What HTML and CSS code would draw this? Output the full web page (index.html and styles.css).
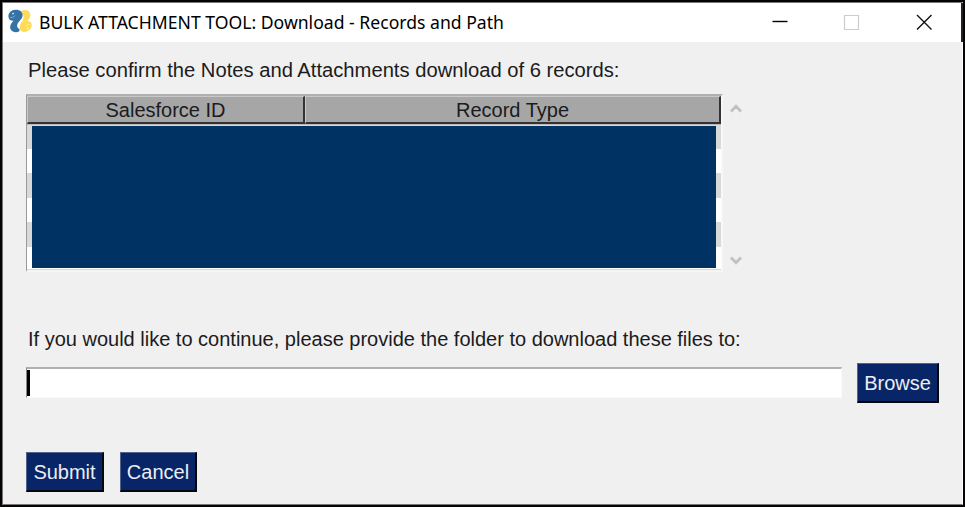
FILE: index.html
```
<!DOCTYPE html>
<html lang="en">
<head>
<meta charset="utf-8">
<title>BULK ATTACHMENT TOOL</title>
<link rel="stylesheet" href="styles.css">
</head>
<body>
<main class="window">
  <header class="titlebar">
    <svg class="logo" viewBox="0 0 24 24" width="24" height="24">
      <path fill="#ffdc55" d="M13.6 2C16.5 0 21 .8 22.2 4.4C22.9 8.2 20.6 10.2 19.4 12.2C21.6 12 23.7 13 23.8 15.8C23.9 19.5 20.5 22.8 16.4 23C12.4 23 11 19.6 11.8 16.8C12.6 13.4 15.6 11.4 15.6 8.2C15.6 6.6 15 5.4 13.6 4.6Z"/>
      <path fill="#3673a5" d="M.4 7.6C.2 4 3.2 1 7.4.8C11.8.5 14.8 2.8 14.6 6.6C14.4 10.8 9.6 12.8 9.2 16.2C9 18.2 9.8 19.4 11.4 19.8V22.2C8.4 24.4 3.2 23 2.2 19.2C1.6 15.8 4 13.6 5.6 11.4C3.4 12.2.8 11.4.4 7.6Z"/>
      <path d="M2 8.6Q4.6 9.2 7.2 6.6M17 17.6Q19.5 14.8 22.4 15.4" fill="none" stroke="#fff" stroke-opacity=".45" stroke-width=".8"/>
      <circle cx="5" cy="4.6" r=".8" fill="#fff"/><circle cx="19.6" cy="19.2" r=".8" fill="#fff"/>
    </svg>
    <h1 class="title"><span>BULK ATTACHMENT TOOL: Download - Records and Path</span></h1>
    <svg class="controls" viewBox="0 0 160 20" width="160" height="20" fill="none">
      <path d="M0.5 8.5H15.5" stroke="#000" stroke-width="1.4"/>
      <path d="M72.5 2.5H86.5V16.5H72.5Z" stroke="#ccc" stroke-width="1.2"/>
      <path d="M145 1.9L159.5 16.4M159.5 1.9L145 16.4" stroke="#111" stroke-width="1.4"/>
    </svg>
  </header>
  <section class="content">
    <p class="label confirm"><span>Please confirm the Notes and Attachments download of 6 records:</span></p>
    <div class="records">
      <div class="table">
        <div class="thead">
          <div class="th th-id"><span>Salesforce ID</span></div>
          <div class="th th-type"><span>Record Type</span></div>
        </div>
        <div class="rows"><div class="mask"></div></div>
      </div>
      <div class="scroll">
        <svg width="12" height="9" viewBox="0 0 12 9"><path d="M1 7.5L6 2.3L11 7.5" fill="none" stroke="#c0c0c0" stroke-width="2.8"/></svg>
        <svg width="12" height="9" viewBox="0 0 12 9"><path d="M1 1.5L6 6.7L11 1.5" fill="none" stroke="#c0c0c0" stroke-width="2.8"/></svg>
      </div>
    </div>
    <p class="label folder"><span>If you would like to continue, please provide the folder to download these files to:</span></p>
    <div class="path">
      <div class="input"><i class="caret"></i></div>
      <button class="btn browse"><span>Browse</span></button>
    </div>
    <div class="actions">
      <button class="btn submit"><span>Submit</span></button>
      <button class="btn cancel"><span>Cancel</span></button>
    </div>
  </section>
</main>
</body>
</html>
```
FILE: styles.css
```
* { box-sizing: border-box; }
html, body { margin: 0; background: #050303; }
body { width: 965px; height: 507px; padding: 2px; overflow: hidden; font: 20px/24px "Liberation Sans", Arial, sans-serif; color: #1b1b20; }
.window { width: 961px; height: 503px; background: #f0f0f0; border: 1px solid #777; border-right-color: #fff; }
.titlebar { height: 39px; width: 958px; background: #fff; display: flex; align-items: center; box-shadow: 2px 0 #222; padding-bottom: 1px; }
.logo { margin-left: 5px; flex: none; position: relative; top: -1px; }
.title { margin: 0 0 0 7px; width: 733px; font: 400 18px/24px "Noto Sans", sans-serif; color: #000; white-space: nowrap; }
.title span, .label span, .th span, .btn span { display: inline-block; white-space: nowrap; transform-origin: 0 50%; }
.title span { transform: scaleX(.978); }
.controls { flex: none; position: relative; top: 1px; }
.content { padding: 0 22px 0 23px; }
.label { margin: 0; height: 24px; padding-left: 2px; }
.confirm { margin-top: 16px; }
.confirm span { transform: scaleX(1.0095); }
.records { margin-top: 12px; display: flex; height: 178px; }
.table { width: 697px; background: #fff; border: 2px solid #999; border-left: 1px solid #999; border-top-color: #b0b0b0; border-right-color: #f7f7f7; border-bottom-color: #f5f5f5; }
.thead { display: flex; height: 29px; border-bottom: 1px solid #bbb; }
.th { height: 28px; background: #a6a6a6; border: 1px solid #c8c8c8; border-right: 2px solid #333; border-bottom: 2px solid #333; text-align: center; line-height: 26px; }
.th span { transform-origin: 50% 50%; }
.th-id { width: 278px; }
.th-type { width: 416px; }
.rows { height: 145px; padding: 1px 5px 0 5px; background: repeating-linear-gradient(#d9d9d9 0 24.6px, #fff 24.6px 49.2px) 0 -1px; }
.mask { height: 142px; background: #003264; }
.scroll { margin-left: 7px; padding: 10px 0 7px; display: flex; flex-direction: column; justify-content: space-between; }
.folder { margin-top: 55px; }
.path { margin-top: 12px; display: flex; height: 42px; }
.input { width: 816px; height: 31px; margin-top: 4px; background: #fff; border: 1px solid #ddd; border-top: 2px solid #b0b0b0; border-left: 1px solid #888; border-right-color: #fafafa; border-bottom-color: #fafafa; padding-top: 1px; }
.caret { display: block; width: 3px; height: 26px; background: #000; }
.btn { height: 40px; padding: 0; border: 2px solid #05070c; border-top: 1px solid #51628f; border-left: 1px solid #51628f; background: #082567; color: #eceef2; font: inherit; display: flex; justify-content: center; align-items: center; }
.btn span { transform-origin: 50% 50%; }
.browse { width: 82px; margin-left: 15px; }
.actions { margin-top: 47px; display: flex; gap: 15px; }
.submit { width: 78px; }
.cancel { width: 77px; margin-left: 1px; }
```
